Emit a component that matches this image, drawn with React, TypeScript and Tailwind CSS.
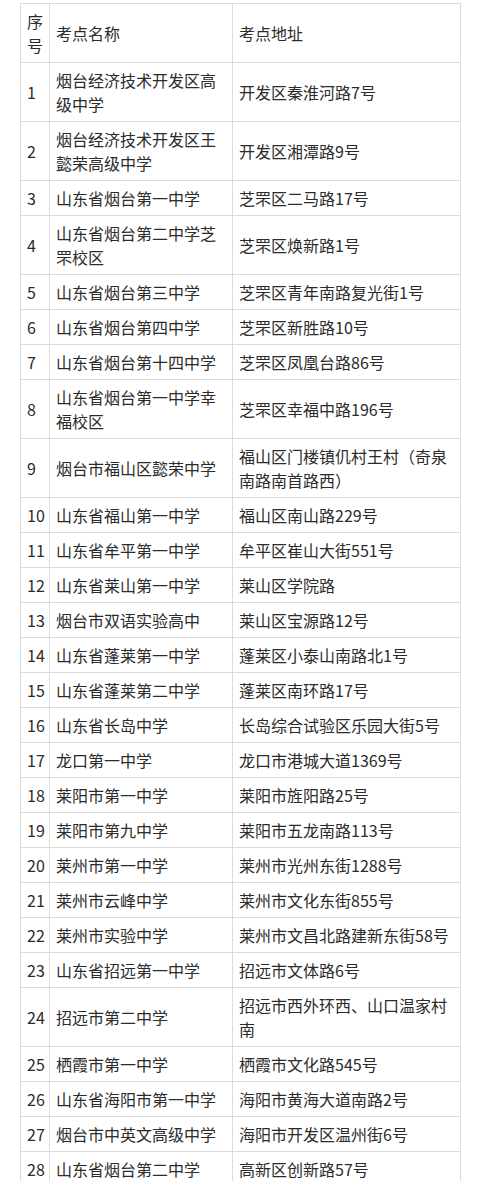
import React from "react";

const rows: [string, string, string][] = [
  ["1", "烟台经济技术开发区高级中学", "开发区秦淮河路7号"],
  ["2", "烟台经济技术开发区王懿荣高级中学", "开发区湘潭路9号"],
  ["3", "山东省烟台第一中学", "芝罘区二马路17号"],
  ["4", "山东省烟台第二中学芝罘校区", "芝罘区焕新路1号"],
  ["5", "山东省烟台第三中学", "芝罘区青年南路复光街1号"],
  ["6", "山东省烟台第四中学", "芝罘区新胜路10号"],
  ["7", "山东省烟台第十四中学", "芝罘区凤凰台路86号"],
  ["8", "山东省烟台第一中学幸福校区", "芝罘区幸福中路196号"],
  ["9", "烟台市福山区懿荣中学", "福山区门楼镇仉村王村（奇泉南路南首路西）"],
  ["10", "山东省福山第一中学", "福山区南山路229号"],
  ["11", "山东省牟平第一中学", "牟平区崔山大街551号"],
  ["12", "山东省莱山第一中学", "莱山区学院路"],
  ["13", "烟台市双语实验高中", "莱山区宝源路12号"],
  ["14", "山东省蓬莱第一中学", "蓬莱区小泰山南路北1号"],
  ["15", "山东省蓬莱第二中学", "蓬莱区南环路17号"],
  ["16", "山东省长岛中学", "长岛综合试验区乐园大街5号"],
  ["17", "龙口第一中学", "龙口市港城大道1369号"],
  ["18", "莱阳市第一中学", "莱阳市旌阳路25号"],
  ["19", "莱阳市第九中学", "莱阳市五龙南路113号"],
  ["20", "莱州市第一中学", "莱州市光州东街1288号"],
  ["21", "莱州市云峰中学", "莱州市文化东街855号"],
  ["22", "莱州市实验中学", "莱州市文昌北路建新东街58号"],
  ["23", "山东省招远第一中学", "招远市文体路6号"],
  ["24", "招远市第二中学", "招远市西外环西、山口温家村南"],
  ["25", "栖霞市第一中学", "栖霞市文化路545号"],
  ["26", "山东省海阳市第一中学", "海阳市黄海大道南路2号"],
  ["27", "烟台市中英文高级中学", "海阳市开发区温州街6号"],
  ["28", "山东省烟台第二中学", "高新区创新路57号"],
];

const cell =
  "border border-[#dcdcdc] px-[6px] py-[5px] align-middle text-left font-normal leading-6";

export default function App() {
  return (
    <div
      className="bg-white text-[16px] text-[#2b2b2b] pt-[3px] pl-[20px]"
      style={{ fontFamily: '"Noto Sans CJK SC", "Noto Sans", sans-serif' }}
    >
      <table className="table-fixed border-collapse w-[440px]">
        <colgroup>
          <col className="w-[29px]" />
          <col className="w-[183px]" />
          <col className="w-[228px]" />
        </colgroup>
        <thead>
          <tr>
            <th className={`${cell} break-all`}>序号</th>
            <th className={cell}>考点名称</th>
            <th className={cell}>考点地址</th>
          </tr>
        </thead>
        <tbody>
          {rows.map(([n, name, addr]) => (
            <tr key={n}>
              <td className={`${cell} px-[5px] whitespace-nowrap`}>{n}</td>
              <td className={`${cell} break-all`}>{name}</td>
              <td className={`${cell} break-all`}>{addr}</td>
            </tr>
          ))}
        </tbody>
      </table>
    </div>
  );
}
